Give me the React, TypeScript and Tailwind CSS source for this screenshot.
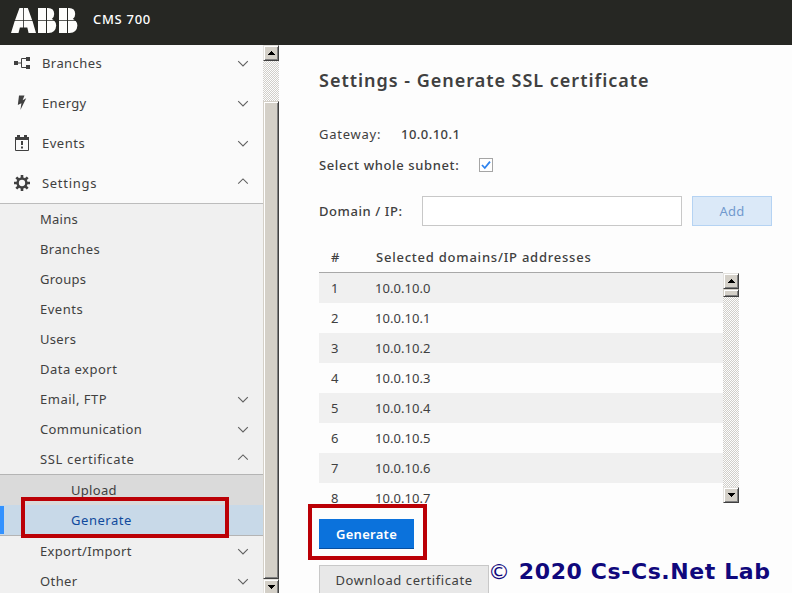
import type { ReactNode } from "react";

function Logo() {
  return (
    <svg width="67" height="26" viewBox="0 0 67 26" className="shrink-0" fill="#fdfdfb">
      <path d="M8.5 0H12.2V12.3H4Z M13 0H16.8L21.2 12.3H13Z M3.7 13H12.2V19.6H8.9L7.5 25H0Z M13 13H21.5L25 25H17.6L16.3 19.6H13Z" />
      <path d="M27 0H35V12.3H27Z M36 0H37Q43.2 0.2 43.2 6Q43.2 9.5 40.8 11.1Q42 11.4 42.8 12.3H36Z M27 13H35V25H27Z M36 13H43.5Q45.2 14.5 45.2 17.5Q44.8 24.6 37.6 25H36Z" />
      <path d="M48 0H56V12.3H48Z M57 0H58Q64.2 0.2 64.2 6Q64.2 9.5 61.8 11.1Q63 11.4 63.8 12.3H57Z M48 13H56V25H48Z M57 13H64.7Q66.4 14.5 66.4 17.5Q66 24.6 58.6 25H57Z" />
    </svg>
  );
}

function Chevron({ up = false }: { up?: boolean }) {
  return (
    <svg width="12" height="8" viewBox="0 0 12 8" fill="none" stroke="#606060" strokeWidth="1.1" className={up ? "-translate-y-px" : "translate-y-px"}>
      <path d={up ? "M1.2 5.6L6 0.9L10.8 5.6" : "M1.2 1.2L6 5.9L10.8 1.2"} />
    </svg>
  );
}

function BranchesIcon() {
  return (
    <svg width="18" height="14" viewBox="0 0 18 14" fill="#404040">
      <path d="M1 5H5V9H1Z M13 1H17V5H13Z M13 9H17V13H13Z" />
      <path d="M5 7H8 M13 2.5H8.5V11.5H13" fill="none" stroke="#404040" />
    </svg>
  );
}

function EnergyIcon() {
  return (
    <svg width="18" height="16" viewBox="0 0 18 16" fill="#404040">
      <path d="M6 0.5H11.5L9.6 5.2L13.2 3.2L7.4 15L8.4 8.2L4.8 10Z" />
    </svg>
  );
}

function EventsIcon() {
  return (
    <svg width="18" height="17" viewBox="0 0 18 17" fill="#404040">
      <path d="M2.5 3.5H15.5V15.5H2.5Z" fill="none" stroke="#404040" />
      <path d="M2 2H16V5H2Z M4 0H7V3H4Z M11 0H14V3H11Z M8 6H10V10H8Z M8 11.5H10V13.5H8Z" />
    </svg>
  );
}

function SettingsIcon() {
  return (
    <svg width="18" height="18" viewBox="0 0 18 18" fill="none" stroke="#404040">
      <circle cx="9" cy="9" r="4.4" strokeWidth="2.5" />
      <path d="M9 1V4 M9 14V17 M1 9H4 M14 9H17 M3.3 3.3L5.5 5.5 M12.5 12.5L14.7 14.7 M3.3 14.7L5.5 12.5 M12.5 5.5L14.7 3.3" strokeWidth="2.6" />
    </svg>
  );
}

function ArrowButton({ down = false }: { down?: boolean }) {
  return (
    <div className="flex h-4 w-4 shrink-0 items-center justify-center border border-t-[#e4e2de] border-l-[#e4e2de] border-r-[#404040] border-b-[#404040] bg-[#d4d0c8] shadow-[inset_1px_1px_0_#fff,inset_-1px_-1px_0_#808080]">
      <svg width="7" height="4" viewBox="0 0 7 4" shapeRendering="crispEdges">
        <path d={down ? "M0 0H7L3.5 4Z" : "M3.5 0L7 4H0Z"} />
      </svg>
    </div>
  );
}

const track = "bg-[repeating-conic-gradient(#d0cec9_0_25%,#fdfdfd_0_50%)] bg-[length:2px_2px]";
const thumb =
  "border border-t-[#d4d0c8] border-l-[#d4d0c8] border-r-[#404040] border-b-[#404040] bg-[#d4d0c8] shadow-[inset_1px_1px_0_#fff,inset_-1px_-1px_0_#808080]";

function MainItem({ icon, label, spacing, open }: { icon: ReactNode; label: string; spacing: string; open?: boolean }) {
  return (
    <div className="flex h-10 shrink-0 items-center pr-[14px] pl-[13px]">
      <span className="flex w-[29px] shrink-0">{icon}</span>
      <span className={`flex-1 ${spacing}`}>{label}</span>
      <Chevron up={open} />
    </div>
  );
}

function SubItem({ label, spacing, arrow }: { label: string; spacing: string; arrow?: "up" | "down" }) {
  return (
    <div className="flex h-[30px] shrink-0 items-center pr-[14px] pl-10">
      <span className={`flex-1 ${spacing}`}>{label}</span>
      {arrow && <Chevron up={arrow === "up"} />}
    </div>
  );
}

function Sidebar() {
  return (
    <nav className="flex w-[263px] shrink-0 flex-col overflow-hidden bg-[#fafafa]">
      <div className="-mt-0.5 flex shrink-0 flex-col">
        <MainItem icon={<BranchesIcon />} label="Branches" spacing="tracking-[0.42px]" />
        <MainItem icon={<EnergyIcon />} label="Energy" spacing="tracking-[0.35px]" />
        <MainItem icon={<EventsIcon />} label="Events" spacing="tracking-[0.5px]" />
        <MainItem icon={<SettingsIcon />} label="Settings" spacing="tracking-[0.7px]" open />
      </div>
      <div className="flex shrink-0 flex-col border-t border-[#bcbcbc] bg-[#f0f0f0]">
        <SubItem label="Mains" spacing="tracking-[0.25px]" />
        <SubItem label="Branches" spacing="tracking-[0.42px]" />
        <SubItem label="Groups" spacing="tracking-[0.25px]" />
        <SubItem label="Events" spacing="tracking-[0.5px]" />
        <SubItem label="Users" spacing="tracking-[0.3px]" />
        <SubItem label="Data export" spacing="tracking-[0.48px]" />
        <SubItem label="Email, FTP" spacing="tracking-[0.5px]" arrow="down" />
        <SubItem label="Communication" spacing="tracking-[0.38px]" arrow="down" />
        <SubItem label="SSL certificate" spacing="tracking-[0.64px]" arrow="up" />
        <div className="border-y border-[#b4b4b4] bg-[#dadada]">
          <div className="flex h-[30px] items-center pl-[71px] tracking-[0.3px]">Upload</div>
          <div className="relative flex h-[30px] items-center bg-[#c8d9e8] pl-[71px] tracking-[0.55px] text-[#104a9c]">
            <span className="absolute top-px left-0 h-7 w-1 bg-[#3392ff]" />
            Generate
            <span className="absolute -top-2 left-[21px] h-[41px] w-[208px] border-4 border-[#bb0006]" />
          </div>
        </div>
        <SubItem label="Export/Import" spacing="tracking-[0.34px]" arrow="down" />
        <SubItem label="Other" spacing="tracking-[0.4px]" arrow="down" />
      </div>
    </nav>
  );
}

const rows = ["10.0.10.0", "10.0.10.1", "10.0.10.2", "10.0.10.3", "10.0.10.4", "10.0.10.5", "10.0.10.6", "10.0.10.7"];

function DomainTable() {
  return (
    <section className="mt-4 w-[420px] shrink-0">
      <div className="flex h-[30px] items-center font-medium">
        <span className="w-[57px] pl-3">#</span>
        <span className="tracking-[0.77px]">Selected domains/IP addresses</span>
      </div>
      <div className="flex h-[231px]">
        <div className="w-[404px] overflow-hidden border-t border-[#a8a8a8]">
          {rows.map((ip, i) => (
            <div key={ip} className="flex h-[30px] items-center odd:bg-[#f0f0f0]">
              <span className="w-[56px] pl-3">{i + 1}</span>
              <span className="tracking-[0.05px]">{ip}</span>
            </div>
          ))}
        </div>
        <div className={`mt-px flex w-4 flex-col ${track}`}>
          <ArrowButton />
          <div className={`h-2 w-4 ${thumb}`} />
          <div className="flex-1" />
          <ArrowButton down />
        </div>
      </div>
    </section>
  );
}

function Content() {
  return (
    <main className="flex min-w-0 flex-1 flex-col overflow-hidden bg-[#fdfdfd] pl-10">
      <h1 className="mt-[21px] h-7 shrink-0 text-[18px] leading-7 font-semibold tracking-[0.98px] whitespace-nowrap">Settings - Generate SSL certificate</h1>
      <div className="mt-[25px] flex h-[30px] shrink-0 items-center">
        <span className="w-[82px] tracking-[0.75px]">Gateway:</span>
        <span className="font-medium tracking-[0.45px]">10.0.10.1</span>
      </div>
      <div className="flex h-8 shrink-0 items-center">
        <span className="w-40 font-medium tracking-[0.62px]">Select whole subnet:</span>
        <span className="flex h-[14px] w-[14px] items-center justify-center border border-[#a5a5a5] bg-white">
          <svg width="10" height="10" viewBox="0 0 10 10" fill="none" stroke="#2f83ee" strokeWidth="1.8">
            <path d="M1 5L3.8 8L9 1.6" />
          </svg>
        </span>
      </div>
      <div className="mt-[15px] flex h-[30px] shrink-0 items-center">
        <span className="w-[103px] font-medium tracking-[0.58px]">Domain / IP:</span>
        <span className="h-[30px] w-[260px] border border-[#c8c8c8] bg-white" />
        <span className="ml-[10px] flex h-[30px] w-20 items-center justify-center border border-[#b5d3f3] bg-[#dbe9f8] tracking-[0.2px] text-[#7199ce]">Add</span>
      </div>
      <DomainTable />
      <div className="mt-4 flex shrink-0">
        <div className="relative flex h-[30px] w-[95px] items-center justify-center border-b border-[#064ea0] bg-[#0b72dc] font-semibold tracking-[0.3px] text-white">
          Generate
          <span className="absolute -top-[15px] -left-[11px] h-[56px] w-[119px] border-4 border-[#bb0006]" />
        </div>
      </div>
      <div className="mt-4 flex shrink-0 items-start">
        <div className="flex h-[30px] w-[170px] shrink-0 items-center justify-center border border-[#c8c8c8] bg-[#e8e8e8] tracking-[0.58px]">Download certificate</div>
        <span className="-mt-[7px] -ml-px font-['DejaVu_Sans',sans-serif] text-[22px] leading-7 font-bold tracking-[0.6px] whitespace-nowrap text-[#10087c]">
          <span className="font-normal">©</span> 2020 Cs-Cs.Net Lab
        </span>
      </div>
    </main>
  );
}

export default function App() {
  return (
    <div className="flex h-[593px] w-[792px] flex-col overflow-hidden bg-[#fdfdfd] font-['Noto_Sans',sans-serif] text-[13px] leading-5 text-[#404040]">
      <header className="flex h-[45px] shrink-0 items-start bg-[#262723] pt-2 pl-[11px]">
        <Logo />
        <span className="mt-px ml-[15px] font-medium tracking-[0.7px] text-white">CMS 700</span>
      </header>
      <div className="flex min-h-0 flex-1">
        <Sidebar />
        <div className={`flex w-4 shrink-0 flex-col ${track}`}>
          <ArrowButton />
          <div className="h-10 shrink-0" />
          <div className={`h-[478px] w-4 shrink-0 ${thumb}`} />
          <ArrowButton down />
        </div>
        <Content />
      </div>
    </div>
  );
}
